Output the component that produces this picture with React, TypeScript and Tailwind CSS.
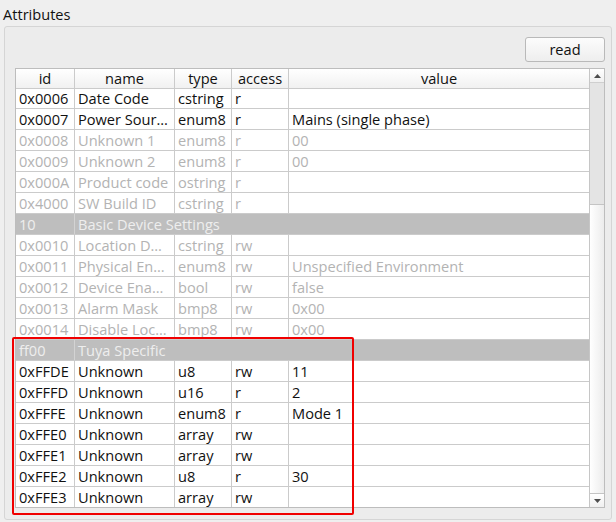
import React from 'react';

type AttrRow = {
  kind: 'attr';
  id: string;
  name: string;
  type: string;
  access: string;
  value: string;
  dim?: boolean;
};

type GroupRow = {
  kind: 'group';
  id: string;
  name: string;
};

type Row = AttrRow | GroupRow;

const rows: Row[] = [
  { kind: 'attr', id: '0x0006', name: 'Date Code', type: 'cstring', access: 'r', value: '' },
  { kind: 'attr', id: '0x0007', name: 'Power Sour…', type: 'enum8', access: 'r', value: 'Mains (single phase)' },
  { kind: 'attr', id: '0x0008', name: 'Unknown 1', type: 'enum8', access: 'r', value: '00', dim: true },
  { kind: 'attr', id: '0x0009', name: 'Unknown 2', type: 'enum8', access: 'r', value: '00', dim: true },
  { kind: 'attr', id: '0x000A', name: 'Product code', type: 'ostring', access: 'r', value: '', dim: true },
  { kind: 'attr', id: '0x4000', name: 'SW Build ID', type: 'cstring', access: 'r', value: '', dim: true },
  { kind: 'group', id: '10', name: 'Basic Device Settings' },
  { kind: 'attr', id: '0x0010', name: 'Location D…', type: 'cstring', access: 'rw', value: '', dim: true },
  { kind: 'attr', id: '0x0011', name: 'Physical En…', type: 'enum8', access: 'rw', value: 'Unspecified Environment', dim: true },
  { kind: 'attr', id: '0x0012', name: 'Device Ena…', type: 'bool', access: 'rw', value: 'false', dim: true },
  { kind: 'attr', id: '0x0013', name: 'Alarm Mask', type: 'bmp8', access: 'rw', value: '0x00', dim: true },
  { kind: 'attr', id: '0x0014', name: 'Disable Loc…', type: 'bmp8', access: 'rw', value: '0x00', dim: true },
  { kind: 'group', id: 'ff00', name: 'Tuya Specific' },
  { kind: 'attr', id: '0xFFDE', name: 'Unknown', type: 'u8', access: 'rw', value: '11' },
  { kind: 'attr', id: '0xFFFD', name: 'Unknown', type: 'u16', access: 'r', value: '2' },
  { kind: 'attr', id: '0xFFFE', name: 'Unknown', type: 'enum8', access: 'r', value: 'Mode 1' },
  { kind: 'attr', id: '0xFFE0', name: 'Unknown', type: 'array', access: 'rw', value: '' },
  { kind: 'attr', id: '0xFFE1', name: 'Unknown', type: 'array', access: 'rw', value: '' },
  { kind: 'attr', id: '0xFFE2', name: 'Unknown', type: 'u8', access: 'r', value: '30' },
  { kind: 'attr', id: '0xFFE3', name: 'Unknown', type: 'array', access: 'rw', value: '' },
];

function rowHeight(index: number) {
  if (index === 0) return 'h-[20px] border-b';
  if (index === rows.length - 1) return 'h-[20px]';
  return 'h-[21px] border-b';
}

function Arrow({ up }: { up?: boolean }) {
  return (
    <svg width="7" height="4" viewBox="0 0 7 4">
      <path d={up ? 'M0 4 L3.5 0 L7 4 Z' : 'M0 0 L3.5 4 L7 0 Z'} fill="#4d4d4d" />
    </svg>
  );
}

export default function App() {
  return (
    <div
      className="relative h-[522px] w-[616px] overflow-hidden bg-[#efefef] text-[14.6px] leading-[19px] text-[#111]"
      style={{ fontFamily: '"Open Sans", "Noto Sans", sans-serif' }}
    >
      <div className="pl-[3px] pt-[5px]">Attributes</div>

      <div className="ml-[4px] mt-[2px] h-[494px] w-[608px] rounded-[3px] border border-[#d5d5d5] bg-[#ececec] pb-[11px] pl-[10px] pr-[6px] pt-[10px]">
        <div className="flex justify-end">
          <button className="h-[25px] w-[80px] rounded-[3px] border border-[#b9b9b9] bg-gradient-to-b from-[#fcfcfc] to-[#eeeeee] text-[14.6px] text-[#111]">
            read
          </button>
        </div>

        <div className="mt-[6px] flex h-[440px] w-[590px] border border-[#bdbdbd] bg-white">
          <div className="w-[574px] shrink-0 border-r border-[#c6c6c6]">
            <div className="flex h-[20px] border-b border-[#cbcbcb] bg-gradient-to-b from-white to-[#f1f1f1] text-center">
              <div className="w-[59px] shrink-0 border-r border-[#cbcbcb]">id</div>
              <div className="w-[100px] shrink-0 border-r border-[#cbcbcb]">name</div>
              <div className="w-[57px] shrink-0 border-r border-[#cbcbcb]">type</div>
              <div className="w-[57px] shrink-0 border-r border-[#cbcbcb]">access</div>
              <div className="w-[300px] shrink-0">value</div>
            </div>

            {rows.map((row, index) =>
              row.kind === 'group' ? (
                <div
                  key={row.id}
                  className={`grid grid-cols-[59px_515px] border-[#cbcbcb] bg-[#bebebe] text-[#eeeeee] ${rowHeight(index)}`}
                >
                  <span className="block border-r border-[#d3d3d3] pl-[3px] pt-[1px]">{row.id}</span>
                  <span className="block pl-[3px] pt-[1px]">{row.name}</span>
                </div>
              ) : (
                <div
                  key={row.id}
                  className={`flex items-stretch border-[#cbcbcb] ${row.dim ? 'text-[#b3b3b3]' : 'text-[#111]'} ${rowHeight(index)}`}
                >
                  <div className="flex w-[59px] shrink-0 items-center border-r border-[#cbcbcb] pl-[3px]">{row.id}</div>
                  <div className="flex w-[100px] shrink-0 items-center overflow-hidden whitespace-nowrap border-r border-[#cbcbcb] pl-[3px]">
                    {row.name}
                  </div>
                  <div className="flex w-[57px] shrink-0 items-center border-r border-[#cbcbcb] pl-[3px]">{row.type}</div>
                  <div className="flex w-[57px] shrink-0 items-center border-r border-[#cbcbcb] pl-[3px]">{row.access}</div>
                  <div className="flex w-[300px] shrink-0 items-center pl-[3px]">{row.value}</div>
                </div>
              )
            )}
          </div>

          <div className="flex flex-1 flex-col">
            <div className="flex h-[14px] items-center justify-center border-b border-[#cfcfcf] bg-gradient-to-b from-white to-[#f0f0f0]">
              <Arrow up />
            </div>
            <div className="h-[121px] bg-[#e4e4e4]" />
            <div className="flex-1 border-y border-[#c4c4c4] bg-gradient-to-r from-white to-[#ececec]" />
            <div className="flex h-[13px] items-center justify-center bg-gradient-to-b from-white to-[#f0f0f0]">
              <Arrow />
            </div>
          </div>
        </div>
      </div>

      <div className="absolute left-[12px] top-[337px] h-[178px] w-[342px] rounded-[2px] border-2 border-[#f00000]" />
    </div>
  );
}
